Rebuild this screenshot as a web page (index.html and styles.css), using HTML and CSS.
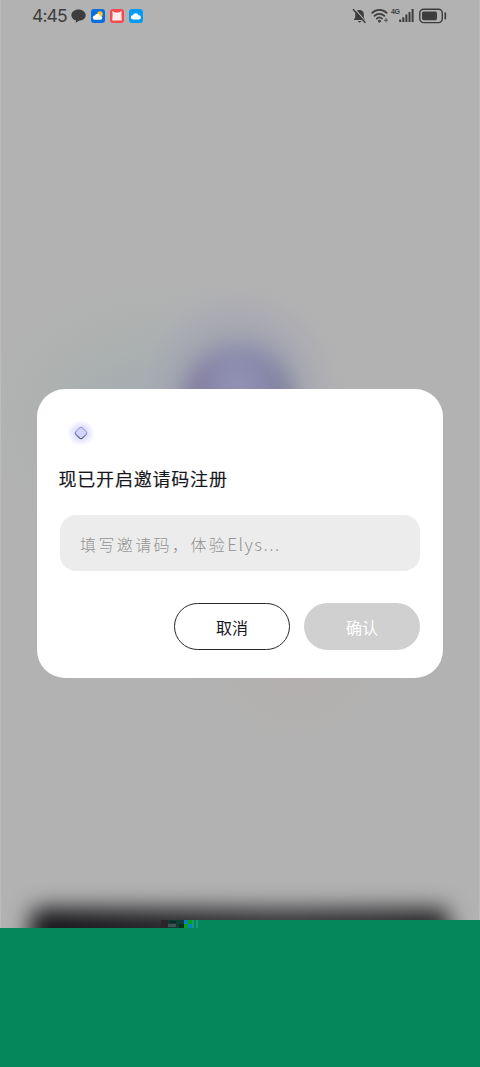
FILE: index.html
```
<!DOCTYPE html>
<html lang="zh-CN">
<head>
<meta charset="utf-8">
<title>Elys</title>
<link rel="stylesheet" href="styles.css">
</head>
<body>
<div class="screen">
  <div class="backdrop" aria-hidden="true">
    <div class="glow glow-mist"></div>
    <div class="glow glow-halo"></div>
    <div class="glow glow-orb"></div>
    <div class="glow glow-core"></div>
    <div class="glow glow-warm"></div>
    <div class="dark-panel"></div>
  </div>
  <header class="status">
    <div class="status-left">
      <span class="time">4:45</span>
      <svg class="bubble" width="15" height="14" viewBox="0 0 15 14"><path d="M7.600.5C3.500.5.4 3 .4 6.200c0 2.500 1.800 4.500 4.600 5.300L4.700 13.700l3.300-2c4-.1 6.700-2.500 6.700-5.500C14.700 3 11.600.5 7.600.5z" fill="#3d3d3d"/></svg>
      <svg class="app" width="14" height="14" viewBox="0 0 14 14"><rect width="14" height="14" rx="3" fill="#086ddd"/><circle cx="9" cy="5" r="2.700" fill="#ffc42f"/><path d="M4 10.800a2.200 2.200 0 0 1-.1-4.400 2.600 2.600 0 0 1 4.900.3 2 2 0 0 1 .8 4.100z" fill="#fff"/></svg>
      <svg class="app" width="14" height="14" viewBox="0 0 14 14"><rect width="14" height="14" rx="3" fill="#f54850"/><path d="M2.400 2l2.600 1.500h4L11.600 2l-.2 4.300.4 5.200H2.200l.4-5.200z" fill="#ffeceb"/></svg>
      <svg class="app" width="14" height="14" viewBox="0 0 14 14"><rect width="14" height="14" rx="3" fill="#079af5"/><path d="M4.200 10.500a2.200 2.200 0 0 1-.3-4.400 3 3 0 0 1 5.700.2 2.100 2.100 0 0 1 .4 4.200z" fill="#fff"/></svg>
    </div>
    <div class="status-right">
      <svg width="15" height="16" viewBox="0 0 15 16"><path d="M7.500 2c2.900 0 4.300 1.800 4.300 4.300v3.200l1.500 2.600H1.700l1.500-2.600V6.300C3.200 3.800 4.600 2 7.500 2z" fill="#3d3d3d"/><path d="M5.600 13h4l-2 1.700z" fill="#3d3d3d"/><path d="M2.700.8l11.500 13.400" stroke="#b2b2b2" stroke-width="1.200"/><path d="M1 1.300l12.400 13.500" stroke="#3d3d3d" stroke-width="1.500"/></svg>
      <svg class="wifi" width="18" height="16" viewBox="0 0 18 16"><g fill="none" stroke="#3d3d3d" stroke-width="1.800" stroke-linecap="round"><path d="M1.200 4.800a10.400 10.400 0 0 1 14.400 0"/><path d="M3.500 7.800a7 7 0 0 1 9.800 0"/><path d="M5.800 10.600a3.800 3.800 0 0 1 5.200 0"/></g><circle cx="8.400" cy="13.200" r="1.400" fill="#3d3d3d"/><path d="M13 12.300h4m-2-2v4" stroke="#555" fill="none" stroke-width="1.100"/></svg>
      <span class="network">4G</span>
      <svg class="signal" width="15" height="15" viewBox="0 0 15 15"><path d="M1.200 14v-2.500M4.300 14V9.200M7.400 14V6.600M10.500 14V4M13.600 14V1" stroke="#3d3d3d" stroke-width="2"/></svg>
      <svg class="battery" width="28" height="16" viewBox="0 0 28 16"><rect x=".8" y="1.200" width="22.500" height="13.400" rx="3.800" fill="none" stroke="#3d3d3d" stroke-width="1.400"/><rect x="3" y="3.500" width="15" height="8.800" rx="1.800" fill="#3d3d3d"/><path d="M26.300 5v5.600" stroke="#3d3d3d" stroke-width="1.700" stroke-linecap="round"/></svg>
    </div>
  </header>

  <main class="dialog" role="dialog" aria-labelledby="title">
    <div class="logo">
      <svg width="16" height="16" viewBox="0 0 16 16"><defs><linearGradient id="edge" x1="0" y1="0" x2=".7" y2="1"><stop offset="0" stop-color="#9794c4"/><stop offset=".4" stop-color="#aaaad0"/><stop offset="1" stop-color="#515074"/></linearGradient></defs><rect x="3.400" y="3.400" width="9.200" height="9.200" rx="2.200" transform="rotate(45 8 8)" fill="#d4d5ff" stroke="url(#edge)" stroke-width="1.100"/></svg>
    </div>
    <h1 class="title" id="title">现已开启邀请码注册</h1>
    <div class="field">填写邀请码<span class="comma">，</span>体验<span class="latin">Elys...</span></div>
    <div class="actions">
      <button class="button cancel">取消</button>
      <button class="button confirm">确认</button>
    </div>
  </main>

  <footer class="footer">
    <svg class="strip" width="480" height="8" viewBox="0 0 480 8"><path fill="#2b2529" d="M161 0h7v8h-7z"/><path fill="#123d35" d="M168 0h16v8h-16z"/><path fill="#40534e" d="M168 4h8v3h-8z"/><path fill="#102b26" d="M169 1h7v2h-7zM179 4h5v4h-5z"/><path fill="#087fc7" d="M184 0h4v4h-4zM188 4h4v4h-4z"/><path fill="#08a313" d="M184 4h4v4h-4zM188 0h4v4h-4z"/><path fill="#05865b" d="M192 0h288v8H192z"/><path fill="#189b73" d="M192 0h2v8h-2zM196 0h2v8h-2z"/></svg>
    <div class="green"></div>
  </footer>
</div>
</body>
</html>
```
FILE: styles.css
```
* { box-sizing: border-box; }
body { margin: 0; }
.screen {
  position: relative;
  display: flex;
  flex-direction: column;
  width: 480px;
  height: 1067px;
  overflow: hidden;
  background: #b2b2b2;
  font-family: "Noto Sans CJK SC", sans-serif;
}
.backdrop {
  position: absolute;
  inset: 0;
  overflow: hidden;
  border-left: 1px solid #bcbcbc;
  border-right: 1px solid #bcbcbc;
}
.glow { position: absolute; border-radius: 50%; }
.glow-mist { left: -20px; top: 280px; width: 350px; height: 270px; background: radial-gradient(closest-side, rgba(152, 168, 173, .7), rgba(165, 175, 173, .35) 60%, transparent); }
.glow-halo { left: 118px; top: 268px; width: 240px; height: 240px; background: radial-gradient(closest-side, rgba(146, 148, 174, .75) 20%, rgba(158, 158, 178, .45) 55%, rgba(172, 172, 180, .2) 80%, transparent); }
.glow-orb { left: 183px; top: 347px; width: 110px; height: 108px; background: linear-gradient(90deg, #81789c, #8d8dae 40%, #8888ab 70%, #7d8298); filter: blur(10px); }
.glow-core { left: 205px; top: 355px; width: 65px; height: 70px; background: radial-gradient(closest-side, rgba(150, 151, 186, .5), transparent); }
.glow-warm { left: 190px; top: 575px; width: 210px; height: 180px; background: radial-gradient(closest-side, rgba(180, 168, 162, .3), transparent); }
.dark-panel { position: absolute; left: 29px; top: 908px; width: 420px; height: 150px; border-radius: 12px; background: linear-gradient(90deg, #151519, #343337 60%, #242426); filter: blur(11px); }
.status {
  position: relative;
  display: flex;
  flex: none;
  justify-content: space-between;
  align-items: center;
  height: 31px;
  padding: 0 33px 0 32px;
  color: #3d3d3d;
}
.status-left, .status-right { display: flex; align-items: center; }
.status-left { gap: 5px; }
.time { font: 400 17.500px/24px Inter, sans-serif; letter-spacing: -.9px; width: 34px; }
.wifi { margin-left: 4px; }
.network { align-self: flex-start; margin-left: 2px; width: 8px; font: 700 7px/7px "Liberation Sans", sans-serif; letter-spacing: -.5px; }
.battery { margin-left: 5px; }
.dialog {
  position: relative;
  display: flex;
  flex: none;
  flex-direction: column;
  width: 406px;
  height: 289px;
  margin: 358px auto 0;
  padding: 31px 23px 28px;
  border-radius: 28px;
  background: #fff;
}
.logo {
  display: grid;
  place-items: center;
  width: 28px;
  height: 28px;
  margin: 0 0 0 7px;
  border-radius: 50%;
  background: radial-gradient(closest-side, #cfd0ff, #e3e3ff 50%, rgba(255, 255, 255, 0));
}
.title { margin: 19px 0 0 -1.500px; font-size: 18px; font-weight: 400; line-height: 26px; letter-spacing: .8px; color: #17171d; -webkit-text-stroke: .15px #17171d; }
.field {
  height: 56px;
  margin-top: 24.500px;
  padding: 0 20px;
  border-radius: 16px;
  background: #ececec;
  color: #929292;
  font-size: 16px;
  font-weight: 300;
  line-height: 57px;
  letter-spacing: 2.400px;
  white-space: nowrap;
}
.latin { font-size: 17px; letter-spacing: 1.500px; }
.actions { display: flex; justify-content: flex-end; gap: 14px; margin-top: 32px; }
.button { width: 116px; height: 47px; padding: 0; border: 0; border-radius: 24px; font: 400 16px/24px "Noto Sans CJK SC", sans-serif; }
.cancel { border: 1.500px solid #29292c; background: #fff; color: #17171b; }
.confirm { background: #d0d0d0; color: #fff; }
.footer { position: relative; display: flex; flex-direction: column; margin-top: auto; }
.strip { display: block; }
.green { height: 139px; background: #05865b; }
```
